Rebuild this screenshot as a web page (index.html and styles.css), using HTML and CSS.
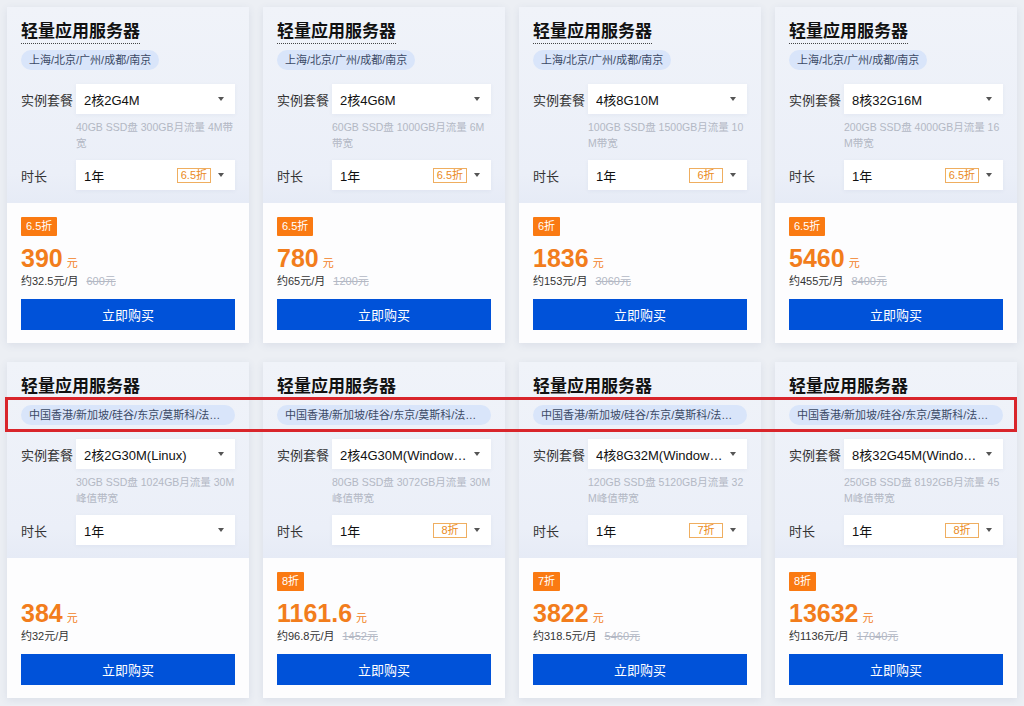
FILE: index.html
```html
<!DOCTYPE html>
<html lang="zh-CN">
<head>
    <meta charset="UTF-8">
    <meta name="viewport" content="width=device-width, initial-scale=1.0">
    <title>轻量应用服务器</title>
    <link rel="stylesheet" href="styles.css">
</head>
<body>
    <div class="grid">
        <!-- row 1: mainland regions -->
        <div class="card">
            <div class="card-top">
                <h3 class="title dotted">轻量应用服务器</h3>
                <div><span class="region">上海/北京/广州/成都/南京</span></div>
                <div class="row">
                    <span class="label">实例套餐</span>
                    <div class="select"><span class="val">2核2G4M</span><i class="caret"></i></div>
                </div>
                <p class="desc">40GB SSD盘 300GB月流量 4M带宽</p>
                <div class="row">
                    <span class="label">时长</span>
                    <div class="select"><span class="val">1年</span><span class="off">6.5折</span><i class="caret"></i></div>
                </div>
            </div>
            <div class="card-bottom">
                <span class="badge">6.5折</span>
                <div class="price">390<small>元</small></div>
                <div class="month">约32.5元/月<s>600元</s></div>
                <button class="buy">立即购买</button>
            </div>
        </div>

        <div class="card">
            <div class="card-top">
                <h3 class="title dotted">轻量应用服务器</h3>
                <div><span class="region">上海/北京/广州/成都/南京</span></div>
                <div class="row">
                    <span class="label">实例套餐</span>
                    <div class="select"><span class="val">2核4G6M</span><i class="caret"></i></div>
                </div>
                <p class="desc">60GB SSD盘 1000GB月流量 6M带宽</p>
                <div class="row">
                    <span class="label">时长</span>
                    <div class="select"><span class="val">1年</span><span class="off">6.5折</span><i class="caret"></i></div>
                </div>
            </div>
            <div class="card-bottom">
                <span class="badge">6.5折</span>
                <div class="price">780<small>元</small></div>
                <div class="month">约65元/月<s>1200元</s></div>
                <button class="buy">立即购买</button>
            </div>
        </div>

        <div class="card">
            <div class="card-top">
                <h3 class="title dotted">轻量应用服务器</h3>
                <div><span class="region">上海/北京/广州/成都/南京</span></div>
                <div class="row">
                    <span class="label">实例套餐</span>
                    <div class="select"><span class="val">4核8G10M</span><i class="caret"></i></div>
                </div>
                <p class="desc">100GB SSD盘 1500GB月流量 10M带宽</p>
                <div class="row">
                    <span class="label">时长</span>
                    <div class="select"><span class="val">1年</span><span class="off">6折</span><i class="caret"></i></div>
                </div>
            </div>
            <div class="card-bottom">
                <span class="badge">6折</span>
                <div class="price">1836<small>元</small></div>
                <div class="month">约153元/月<s>3060元</s></div>
                <button class="buy">立即购买</button>
            </div>
        </div>

        <div class="card">
            <div class="card-top">
                <h3 class="title dotted">轻量应用服务器</h3>
                <div><span class="region">上海/北京/广州/成都/南京</span></div>
                <div class="row">
                    <span class="label">实例套餐</span>
                    <div class="select"><span class="val">8核32G16M</span><i class="caret"></i></div>
                </div>
                <p class="desc">200GB SSD盘 4000GB月流量 16M带宽</p>
                <div class="row">
                    <span class="label">时长</span>
                    <div class="select"><span class="val">1年</span><span class="off">6.5折</span><i class="caret"></i></div>
                </div>
            </div>
            <div class="card-bottom">
                <span class="badge">6.5折</span>
                <div class="price">5460<small>元</small></div>
                <div class="month">约455元/月<s>8400元</s></div>
                <button class="buy">立即购买</button>
            </div>
        </div>

        <!-- row 2: overseas regions -->
        <div class="card">
            <div class="card-top">
                <h3 class="title">轻量应用服务器</h3>
                <div class="region wide">中国香港/新加坡/硅谷/东京/莫斯科/法兰克福/首尔/孟买/曼谷</div>
                <div class="row">
                    <span class="label">实例套餐</span>
                    <div class="select"><span class="val">2核2G30M(Linux)</span><i class="caret"></i></div>
                </div>
                <p class="desc">30GB SSD盘 1024GB月流量 30M峰值带宽</p>
                <div class="row">
                    <span class="label">时长</span>
                    <div class="select"><span class="val">1年</span><i class="caret"></i></div>
                </div>
            </div>
            <div class="card-bottom">
                <span class="badge hidden">无</span>
                <div class="price">384<small>元</small></div>
                <div class="month">约32元/月</div>
                <button class="buy">立即购买</button>
            </div>
        </div>

        <div class="card">
            <div class="card-top">
                <h3 class="title">轻量应用服务器</h3>
                <div class="region wide">中国香港/新加坡/硅谷/东京/莫斯科/法兰克福/首尔/孟买/曼谷</div>
                <div class="row">
                    <span class="label">实例套餐</span>
                    <div class="select"><span class="val">2核4G30M(Windows Server)</span><i class="caret"></i></div>
                </div>
                <p class="desc">80GB SSD盘 3072GB月流量 30M峰值带宽</p>
                <div class="row">
                    <span class="label">时长</span>
                    <div class="select"><span class="val">1年</span><span class="off">8折</span><i class="caret"></i></div>
                </div>
            </div>
            <div class="card-bottom">
                <span class="badge">8折</span>
                <div class="price">1161.6<small>元</small></div>
                <div class="month">约96.8元/月<s>1452元</s></div>
                <button class="buy">立即购买</button>
            </div>
        </div>

        <div class="card">
            <div class="card-top">
                <h3 class="title">轻量应用服务器</h3>
                <div class="region wide">中国香港/新加坡/硅谷/东京/莫斯科/法兰克福/首尔/孟买/曼谷</div>
                <div class="row">
                    <span class="label">实例套餐</span>
                    <div class="select"><span class="val">4核8G32M(Windows Server)</span><i class="caret"></i></div>
                </div>
                <p class="desc">120GB SSD盘 5120GB月流量 32M峰值带宽</p>
                <div class="row">
                    <span class="label">时长</span>
                    <div class="select"><span class="val">1年</span><span class="off">7折</span><i class="caret"></i></div>
                </div>
            </div>
            <div class="card-bottom">
                <span class="badge">7折</span>
                <div class="price">3822<small>元</small></div>
                <div class="month">约318.5元/月<s>5460元</s></div>
                <button class="buy">立即购买</button>
            </div>
        </div>

        <div class="card">
            <div class="card-top">
                <h3 class="title">轻量应用服务器</h3>
                <div class="region wide">中国香港/新加坡/硅谷/东京/莫斯科/法兰克福/首尔/孟买/曼谷</div>
                <div class="row">
                    <span class="label">实例套餐</span>
                    <div class="select"><span class="val">8核32G45M(Windows Server)</span><i class="caret"></i></div>
                </div>
                <p class="desc">250GB SSD盘 8192GB月流量 45M峰值带宽</p>
                <div class="row">
                    <span class="label">时长</span>
                    <div class="select"><span class="val">1年</span><span class="off">8折</span><i class="caret"></i></div>
                </div>
            </div>
            <div class="card-bottom">
                <span class="badge">8折</span>
                <div class="price">13632<small>元</small></div>
                <div class="month">约1136元/月<s>17040元</s></div>
                <button class="buy">立即购买</button>
            </div>
        </div>
    </div>
    <div class="mark"></div>
</body>
</html>
```

FILE: styles.css
```css
*{
    margin: 0;
    padding: 0;
    box-sizing: border-box;
}
body{
    position: relative;
    background-color: #eceff4;
    font-family: "Liberation Sans", "Noto Sans CJK SC", sans-serif;
    color: #222;
    padding: 7px;
}
.grid{
    display: grid;
    grid-template-columns: repeat(4, 242px);
    column-gap: 14px;
    row-gap: 19px;
}
.card{
    background-color: #fff;
    box-shadow: 0 2px 8px rgba(60, 80, 130, 0.10);
    overflow: hidden;
}
.card-top{
    padding: 13px 14px 13px 14px;
    background: linear-gradient(180deg, #f0f3f9 0%, #ebeff8 85%, #e6ebf6 100%);
}
.title{
    display: inline-block;
    font-size: 17px;
    font-weight: bold;
    line-height: 23px;
    color: #111;
    border-bottom: 1px dotted transparent;
}
.title.dotted{
    border-bottom-color: #444;
}
.region{
    display: inline-block;
    margin-top: 6px;
    height: 20px;
    line-height: 20px;
    padding: 0 8px;
    font-size: 11px;
    color: #3c4a66;
    background-color: #d9e5fa;
    border-radius: 10px;
}
.region.wide{
    display: block;
    max-width: 100%;
    white-space: nowrap;
    overflow: hidden;
    text-overflow: ellipsis;
}
.row{
    display: flex;
    align-items: center;
}
.row + .desc{
    margin-top: 5px;
}
.region + .row,
div + .row{
    margin-top: 14px;
}
.desc + .row{
    margin-top: 9px;
}
.label{
    width: 55px;
    font-size: 13px;
    color: #333;
}
.select{
    flex: 1;
    min-width: 0;
    height: 30px;
    display: flex;
    align-items: center;
    padding: 0 11px 0 8px;
    background-color: #fff;
    box-shadow: 0 1px 4px rgba(60, 80, 130, 0.06);
    font-size: 13px;
    color: #111;
}
.val{
    flex: 1;
    min-width: 0;
    white-space: nowrap;
    overflow: hidden;
    text-overflow: ellipsis;
}
.off{
    min-width: 34px;
    height: 15px;
    line-height: 13px;
    padding: 0 3px;
    text-align: center;
    font-size: 11px;
    color: #ea8a23;
    border: 1px solid #efae60;
}
.caret{
    margin-left: 7px;
    width: 0;
    height: 0;
    border-top: 4px solid #555;
    border-left: 3.5px solid transparent;
    border-right: 3.5px solid transparent;
}
.desc{
    padding-left: 55px;
    font-size: 10.5px;
    line-height: 16px;
    color: #b3b8c4;
    word-break: break-all;
}
.card-bottom{
    padding: 14px 14px 13px 14px;
    background-color: #fdfdfe;
}
.badge{
    display: block;
    width: fit-content;
    height: 19px;
    line-height: 19px;
    padding: 0 5px;
    font-size: 11px;
    color: #fff;
    background-color: #fa7a12;
    border-radius: 1px;
}
.badge.hidden{
    visibility: hidden;
}
.price{
    margin-top: 7px;
    height: 30px;
    font-size: 25px;
    line-height: 30px;
    font-weight: bold;
    color: #f27d1c;
}
.price small{
    margin-left: 4px;
    font-size: 11px;
    font-weight: normal;
}
.month{
    height: 16px;
    font-size: 11px;
    line-height: 16px;
    color: #333;
}
.month s{
    margin-left: 8px;
    color: #b3b8c4;
}
.buy{
    display: block;
    width: 100%;
    height: 31px;
    margin-top: 10px;
    border: none;
    background-color: #0052d9;
    color: #fff;
    font-family: "Liberation Sans", "Noto Sans CJK SC", sans-serif;
    font-size: 13px;
    cursor: pointer;
}
.buy:hover{
    background-color: #266fe8;
}
/* red annotation box over the region tags of row 2 */
.mark{
    position: absolute;
    left: 5px;
    top: 397px;
    width: 1012px;
    height: 35px;
    border: 3px solid #d9252b;
}
```
